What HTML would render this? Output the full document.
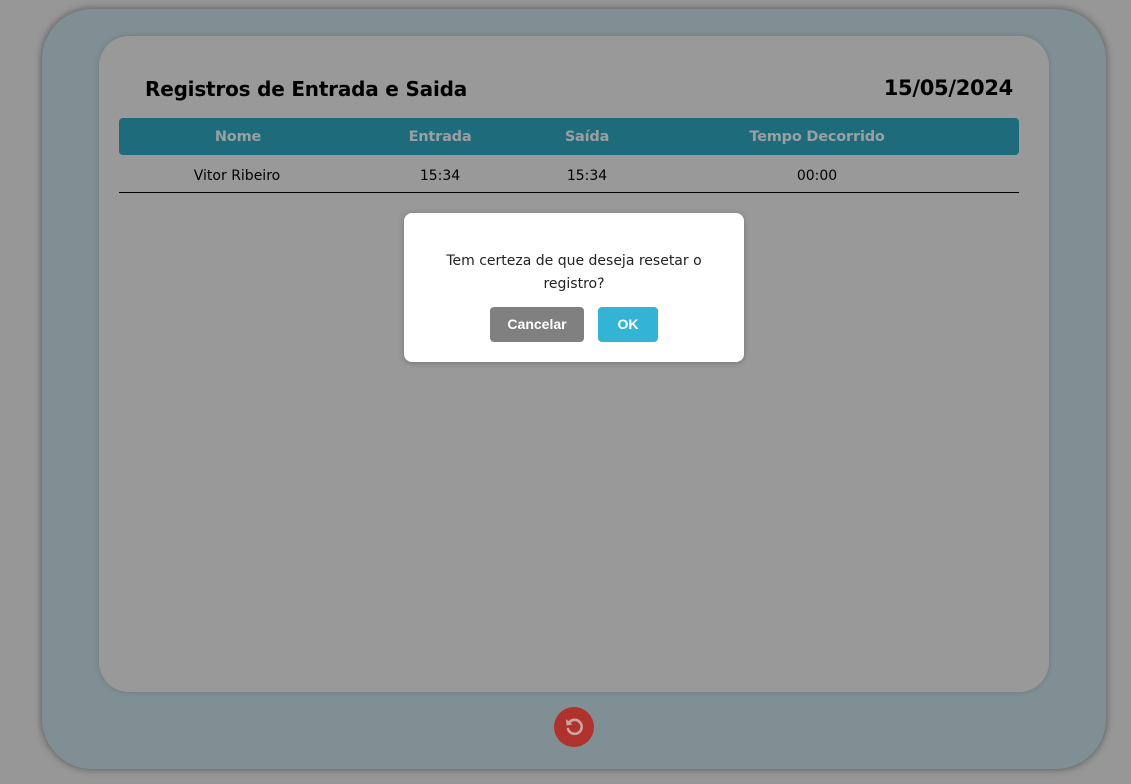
<!DOCTYPE html>
<html><head><meta charset="utf-8"><style>
*{margin:0;padding:0;box-sizing:border-box}
body{width:1131px;height:784px;background:#979797;font-family:"Liberation Sans","DejaVu Sans",sans-serif;position:relative;overflow:hidden}
.frame{position:absolute;left:42px;top:9px;width:1064px;height:760px;border-radius:50px;background:#7f8f93;box-shadow:0 0 8px rgba(0,0,0,.45)}
.panel{position:absolute;left:99px;top:36px;width:950px;height:656px;border-radius:30px;background:#999;box-shadow:0 0 6px rgba(0,0,0,.15)}
h1{position:absolute;left:145px;top:77px;font-size:20px;font-weight:bold;color:#000;font-family:"DejaVu Sans",sans-serif;letter-spacing:-0.2px;white-space:nowrap}
.date{position:absolute;right:118px;top:76px;font-size:21px;font-weight:bold;color:#000;font-family:"DejaVu Sans",sans-serif;letter-spacing:-0.3px}
.bar{position:absolute;left:119px;top:118px;width:900px;height:37px;border-radius:4px;background:#1e6b7c}
.th{position:absolute;top:129px;font-size:14.5px;font-weight:bold;color:#9aa0a2;transform:translateX(-50%);font-family:"DejaVu Sans",sans-serif;white-space:nowrap;letter-spacing:-0.2px}
.td{position:absolute;top:168px;font-size:14px;color:#000;transform:translateX(-50%);font-family:"DejaVu Sans",sans-serif;white-space:nowrap}
.line{position:absolute;left:119px;top:192px;width:900px;height:1px;background:#000}
.modal{position:absolute;left:404px;top:213px;width:340px;height:149px;background:#fff;border-radius:8px;box-shadow:0 1px 6px rgba(0,0,0,.25)}
.msg{position:absolute;left:0;width:340px;top:37px;text-align:center;font-size:14px;line-height:23px;color:#222;font-family:"DejaVu Sans",sans-serif}
.btn{position:absolute;top:94px;height:35px;border-radius:4px;color:#fff;font-weight:bold;font-size:14px;text-align:center;line-height:35px}
.reset{position:absolute;left:554px;top:707px;width:40px;height:40px;border-radius:50%;background:#b0322c}
</style></head><body>
<div class="frame"></div>
<div class="panel"></div>
<h1>Registros de Entrada e Saida</h1>
<div class="date">15/05/2024</div>
<div class="bar"></div>
<div class="th" style="left:238px">Nome</div>
<div class="th" style="left:440px">Entrada</div>
<div class="th" style="left:587px">Saída</div>
<div class="th" style="left:817px">Tempo Decorrido</div>
<div class="td" style="left:237px">Vitor Ribeiro</div>
<div class="td" style="left:440px">15:34</div>
<div class="td" style="left:587px">15:34</div>
<div class="td" style="left:817px">00:00</div>
<div class="line"></div>
<div class="modal">
<div class="msg">Tem certeza de que deseja resetar o<br>registro?</div>
<div class="btn" style="left:86px;width:94px;background:#808080">Cancelar</div>
<div class="btn" style="left:194px;width:60px;background:#33b4d4">OK</div>
</div>
<div class="reset"><svg width="40" height="40" viewBox="0 0 40 40"><path d="M14.5 16.5 A7 7 0 1 1 14 22" fill="none" stroke="#c9a6a3" stroke-width="2.6" stroke-linecap="round"/><path d="M12 12 L12.5 18.5 L18.5 17.5 Z" fill="#c9a6a3"/></svg></div>
</body></html>
